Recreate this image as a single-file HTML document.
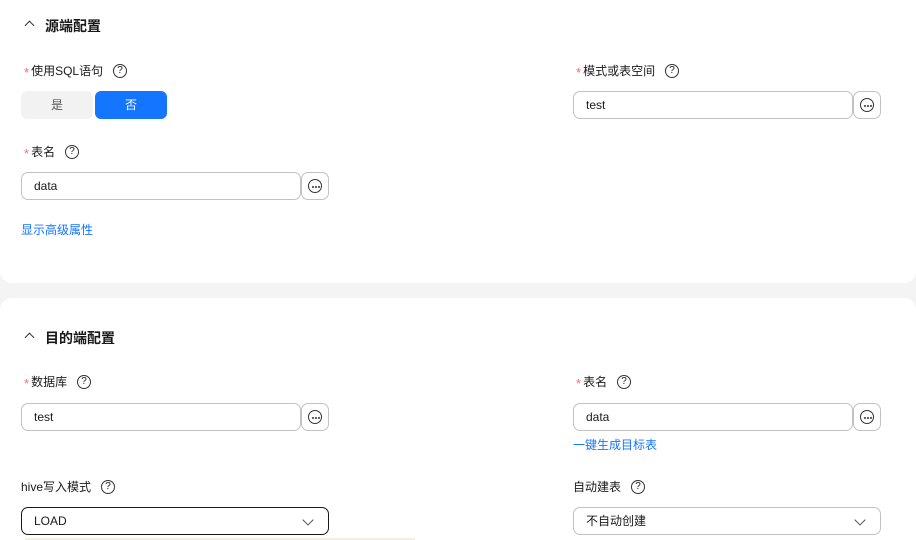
<!DOCTYPE html>
<html><head><meta charset="utf-8"><style>
*{box-sizing:border-box;margin:0;padding:0}
body{width:916px;height:540px;overflow:hidden;background:#f4f4f4;font-family:"Liberation Sans","Noto Sans CJK SC",sans-serif;font-size:12px;color:#191919;position:relative}
.card{position:absolute;left:0;width:916px;background:#fff}
.a{position:absolute}
.h{font-size:14px;font-weight:bold;color:#191919}
.chev{width:7px;height:7px;border-left:1.4px solid #333;border-top:1.4px solid #333;transform:rotate(45deg)}
.lbl{font-size:12px;color:#191919;line-height:16px;white-space:nowrap;display:flex;align-items:center}
.star{color:#f66f6a;font-size:13px;margin-right:2px;line-height:12px;position:relative;top:2px}
.q{display:inline-block;width:14px;height:14px;border:1.2px solid #333;border-radius:50%;font-size:10px;line-height:12px;text-align:center;margin-left:10px}
.inp{height:28px;border:1px solid #c2c2c2;border-radius:7px;padding-left:12px;line-height:26px;font-size:12px}
.btn{width:28px;height:28px;border:1px solid #c2c2c2;border-radius:7px}
.btn i{position:absolute;left:6px;top:6px;width:14px;height:14px;border:1.3px solid #333;border-radius:50%}
.btn b{position:absolute;top:12.5px;width:2px;height:2px;background:#333;border-radius:50%}
.link{color:#1476ff;font-size:12px}
.sel{height:28px;border-radius:7px;padding-left:12px;line-height:26px}
.dn{position:absolute;right:16px;top:8px;width:8px;height:8px;border-right:1.3px solid #555;border-bottom:1.3px solid #555;transform:rotate(45deg)}
</style></head><body>
<div class="card" style="top:0;height:283px;border-radius:0 0 12px 12px"></div>
<div class="card" style="top:298px;height:242px;border-radius:12px 12px 0 0"></div>

<div class="a chev" style="left:26px;top:22px"></div>
<div class="a h" style="left:45px;top:16px">源端配置</div>

<div class="a lbl" style="left:24px;top:63px"><span class="star">*</span>使用SQL语句<span class="q">?</span></div>
<div class="a" style="left:21px;top:91px;width:72px;height:28px;background:#f2f2f2;border-radius:6px;text-align:center;line-height:28px;color:#555">是</div>
<div class="a" style="left:95px;top:91px;width:72px;height:28px;background:#1476ff;border-radius:6px;text-align:center;line-height:28px;color:#fff">否</div>

<div class="a lbl" style="left:576px;top:63px"><span class="star">*</span>模式或表空间<span class="q">?</span></div>
<div class="a inp" style="left:573px;top:91px;width:280px">test</div>
<div class="a btn" style="left:853px;top:91px"><i></i><b style="left:10px"></b><b style="left:13px"></b><b style="left:16px"></b></div>

<div class="a lbl" style="left:24px;top:144px"><span class="star">*</span>表名<span class="q">?</span></div>
<div class="a inp" style="left:21px;top:172px;width:280px">data</div>
<div class="a btn" style="left:301px;top:172px"><i></i><b style="left:10px"></b><b style="left:13px"></b><b style="left:16px"></b></div>

<div class="a link" style="left:21px;top:221px">显示高级属性</div>

<div class="a chev" style="left:26px;top:334px"></div>
<div class="a h" style="left:45px;top:328px">目的端配置</div>

<div class="a lbl" style="left:24px;top:374px"><span class="star">*</span>数据库<span class="q">?</span></div>
<div class="a inp" style="left:21px;top:403px;width:280px">test</div>
<div class="a btn" style="left:301px;top:403px"><i></i><b style="left:10px"></b><b style="left:13px"></b><b style="left:16px"></b></div>

<div class="a lbl" style="left:576px;top:374px"><span class="star">*</span>表名<span class="q">?</span></div>
<div class="a inp" style="left:573px;top:403px;width:280px">data</div>
<div class="a btn" style="left:853px;top:403px"><i></i><b style="left:10px"></b><b style="left:13px"></b><b style="left:16px"></b></div>
<div class="a link" style="left:573px;top:436px">一键生成目标表</div>

<div class="a lbl" style="left:21px;top:479px">hive写入模式<span class="q">?</span></div>
<div class="a sel" style="left:21px;top:507px;width:308px;border:1px solid #191919">LOAD<span class="dn"></span></div>
<div class="a" style="left:25px;top:538px;width:390px;height:2px;background:#f6efe0"></div>

<div class="a lbl" style="left:573px;top:479px">自动建表<span class="q">?</span></div>
<div class="a sel" style="left:573px;top:507px;width:308px;border:1px solid #c2c2c2">不自动创建<span class="dn"></span></div>
</body></html>
